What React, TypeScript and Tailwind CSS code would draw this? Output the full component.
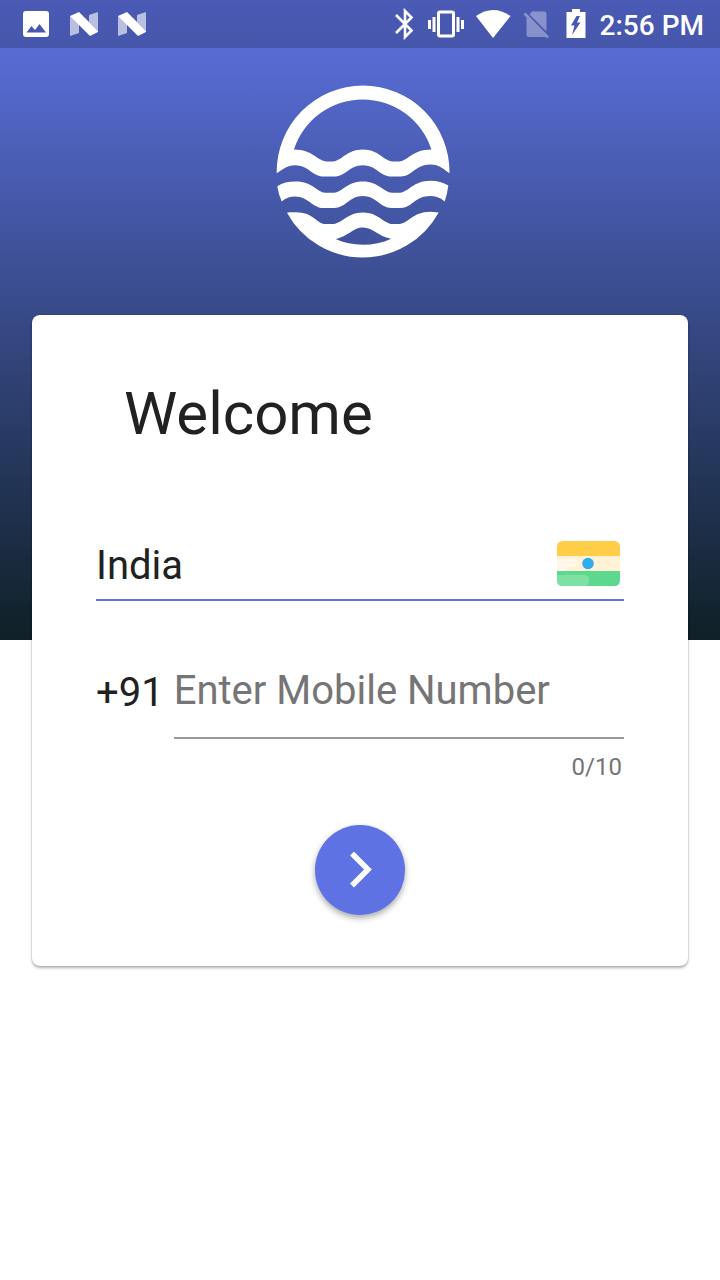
import { useState } from 'react';

function Logo() {
  return (
    <svg viewBox="33 28 523 523" className="h-[174px] w-[174px]" fill="#fff" role="img" aria-label="Waves">
      <path
        fillRule="evenodd"
        d="M35 293 A260 260 0 0 1 294.500 29.500 A260 260 0 0 1 554.500 293 C537 282 525 267 497 267 C450 268 442 303 408 303 H380 C346 303 334 269 294 269 C254 269 242 303 208 303 H176 C143 303 130 269 90 269 C66 269 55 281 35 293 Z
        M87 222 A217 217 0 0 1 500 222 C443 222 428 258 403 258 H383 C356 256 342 222 294 222 C246 222 230 256 205 258 H185 C156 256 144 222 87 222 Z"
      />
      <path d="M37 332 C52 322 70 318 92 318 C144 318 156 350 181 352 H207 C232 350 246 318 294 318 C342 318 356 350 382 352 H406 C431 350 446 316 497 316 C518 316 536 322 551 330 Q548 355 540 378 C526 366 512 362 497 362 C450 362 442 398 408 398 H380 C346 398 334 362 294 362 C254 362 242 398 208 398 H176 C143 398 130 363 90 363 C74 363 62 368 50 378 Q40 355 37 332 Z" />
      <path
        fillRule="evenodd"
        d="M66 412 C77 410 90 411 102 411 C146 413 156 446 184 446 H200 C232 446 246 411 294 411 C342 411 356 446 386 446 H400 C431 446 442 409 497 409 L522 411 A260 260 0 0 1 66 412 Z
        M212 491 C255 480 264 456 295 456 C326 456 338 482 379 490 C329 514 261 514 212 491 Z"
      />
    </svg>
  );
}

function NougatIcon() {
  return (
    <svg viewBox="0 0 28 24" className="h-6 w-7" fill="#fff" aria-hidden="true">
      <path opacity=".62" d="M0 4 L9 10 V21 L0 24 Z M19 3 L28 0 V19 L19 10 Z" />
      <path d="M0 4 L9 0 L28 19 V20 L20 24 L0 4 Z" />
    </svg>
  );
}

function StatusBar() {
  return (
    <header className="flex h-12 items-center justify-between bg-black/20 pr-4 pl-[22px] text-white">
      <div className="flex items-center gap-5">
        <svg viewBox="0 0 28 28" className="h-7 w-7" aria-hidden="true">
          <path
            fill="#fff"
            fillRule="evenodd"
            d="M4 1 H24 Q27 1 27 4 V24 Q27 27 24 27 H4 Q1 27 1 24 V4 Q1 1 4 1 Z M4.500 22.500 H24 L17.500 14 L13 20 L9.500 16 Z"
          />
        </svg>
        <NougatIcon />
        <NougatIcon />
      </div>
      <div className="flex items-center">
        <svg viewBox="0 0 160 36" className="h-9 w-40" aria-hidden="true">
          <path d="M3 9 L18.500 24.500 L12 31 V5 L18.500 11.500 L3 27" fill="none" stroke="#fff" strokeWidth="2.600" />
          <rect x="45.500" y="6" width="15" height="24" rx="1.500" fill="none" stroke="#fff" strokeWidth="3" />
          <path d="M35 14 h3 v9 h-3 Z M39.500 11 h3 v15 h-3 Z M63.500 11 h3 v15 h-3 Z M68 14 h3 v9 h-3 Z" fill="#fff" />
          <path d="M83 10 Q100 -2 117.500 10 L100 32 Z" fill="#fff" />
          <path
            d="M139 5.500 H151 Q153.500 5.500 153.500 8 V25.500 L136.500 8.500 Z M133.500 11 L153.500 31 H136 Q133.500 31 133.500 29 Z M130.500 8.500 L132.500 6.500 L156 30.500 L154 32.500 Z"
            fill="#fff"
            opacity=".35"
          />
        </svg>
        <svg viewBox="0 0 20 30" className="ml-[13px] h-[30px] w-5" aria-hidden="true">
          <path
            fill="#fff"
            fillRule="evenodd"
            d="M6 0 H14 V3 H19.500 V29 H0.500 V3 H6 Z M10.500 7 L5 16.500 H8.500 L6 26 L14.500 13.500 H11 L14 7 Z"
          />
        </svg>
        <time className="ml-[14px] pt-1 font-['Roboto',sans-serif] text-[28px] leading-9 font-medium">2:56 PM</time>
      </div>
    </header>
  );
}

function IndiaFlag() {
  return (
    <svg viewBox="0 0 63 45" className="h-[45px] w-[63px]" role="img" aria-label="Flag of India">
      <path d="M0 15 V6 Q0 0 6 0 H57 Q63 0 63 6 V15 Z" fill="#ffcd47" />
      <path d="M0 15 H63 V30 H0 Z" fill="#fff2d6" />
      <path d="M0 30 H63 V39 Q63 45 57 45 H6 Q0 45 0 39 Z" fill="#5fd88f" />
      <path d="M0 18 H16 Q20 18 20 22 T16 26 H12 Q9 27 9 30 H0 Z" fill="#fff8ea" />
      <path d="M9 30 Q10 34 13 34 H27 Q32 34 32 39 Q32 45 27 45 H6 Q0 45 0 39 V34 H10 Z" fill="#7de1a4" />
      <circle cx="31" cy="22.500" r="5.800" fill="#2fabef" />
    </svg>
  );
}

export default function App() {
  const [country, setCountry] = useState('India');
  const [mobile, setMobile] = useState('');

  return (
    <div className="min-h-screen bg-white bg-[linear-gradient(to_bottom,#5e72e4,#0f2027)] bg-[length:100%_640px] bg-no-repeat font-['Roboto',sans-serif] text-[#212121]">
      <StatusBar />
      <main className="flex flex-col px-8 pb-8">
        <div className="flex justify-center pt-[37px] pb-14 pl-[6px]">
          <Logo />
        </div>
        <form
          className="flex flex-col rounded-lg bg-white px-16 pt-16 pb-[51px] shadow-[0_2px_3px_rgba(0,0,0,0.3),0_0_2px_rgba(0,0,0,0.15)]"
          onSubmit={(e) => e.preventDefault()}
        >
          <h1 className="pl-7 text-[60px] leading-[70px]">Welcome</h1>

          <div className="mt-[72px] flex h-20 items-center border-b-2 border-[#5e72e4] pt-[6px] pr-1">
            <input
              aria-label="Country"
              value={country}
              onChange={(e) => setCountry(e.target.value)}
              className="h-16 min-w-0 flex-1 bg-transparent pt-1 text-[40px] leading-[56px] outline-none"
            />
            <IndiaFlag />
          </div>

          <div className="mt-12 flex items-start gap-[10px]">
            <label htmlFor="mobile" className="pt-5 text-[40px] leading-[48px]">
              +91
            </label>
            <div className="flex min-w-0 flex-1 flex-col">
              <input
                id="mobile"
                type="tel"
                maxLength={10}
                value={mobile}
                onChange={(e) => setMobile(e.target.value)}
                placeholder="Enter Mobile Number"
                className="h-[90px] w-full border-b-2 border-[#9a9a9a] bg-transparent pb-[6px] text-[40px] leading-[48px] outline-none placeholder:text-[#757575]"
              />
              <span className="mt-[14px] pr-[2px] text-right text-2xl leading-7 text-[#757575]">{mobile.length}/10</span>
            </div>
          </div>

          <button
            type="submit"
            aria-label="Continue"
            className="mt-11 flex h-[90px] w-[90px] items-center justify-center self-center rounded-full bg-[#5e72e4] shadow-[0_3px_6px_rgba(0,0,0,0.35)]"
          >
            <svg viewBox="0 0 24 36" className="h-9 w-6" fill="none" stroke="#fff" strokeWidth="5.500" aria-hidden="true">
              <path d="M4 1.500 L20 17.500 L4 33.500" />
            </svg>
          </button>
        </form>
      </main>
    </div>
  );
}
